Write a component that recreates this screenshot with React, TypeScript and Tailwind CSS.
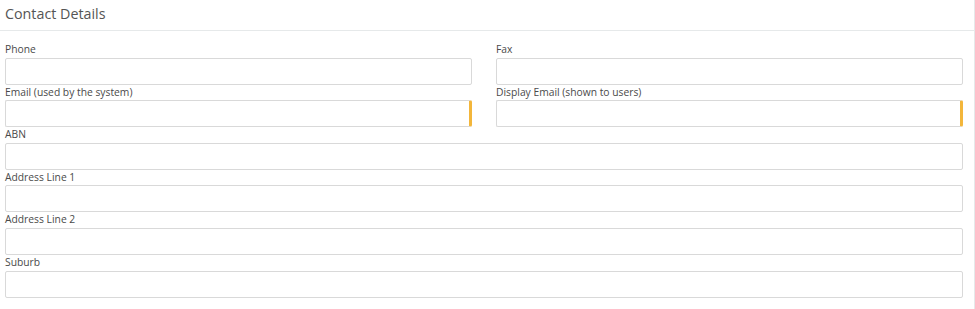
import React from "react";

function Field({ label, accent }: { label: string; accent?: boolean }) {
  return (
    <div className="flex flex-col">
      <div className="h-[15.6px] text-[10.3px] leading-[15px] text-[#4a4a4a] whitespace-nowrap">{label}</div>
      <div
        className={
          "h-[27px] rounded-[2px] border border-[#d9d9d9] bg-white " +
          (accent ? "border-r-[3px] border-r-[#f3b63b]" : "")
        }
      />
    </div>
  );
}

export default function App() {
  return (
    <div
      className="w-[975px] h-[309px] bg-white border-r border-[#e6e9ea]"
      style={{ fontFamily: '"Open Sans", "Liberation Sans", sans-serif' }}
    >
      <div className="h-[31px] border-b border-[#e6e9ea] pl-[5px] pt-[4px] text-[14.3px] leading-[20px] text-[#555555]">
        Contact Details
      </div>
      <div className="pl-[5px] pr-[11px] pt-[11px]">
        <div className="grid grid-cols-2 gap-x-[24px]">
          <Field label="Phone" />
          <Field label="Fax" />
          <Field label="Email (used by the system)" accent />
          <Field label="Display Email (shown to users)" accent />
        </div>
        <Field label="ABN" />
        <Field label="Address Line 1" />
        <Field label="Address Line 2" />
        <Field label="Suburb" />
      </div>
    </div>
  );
}
